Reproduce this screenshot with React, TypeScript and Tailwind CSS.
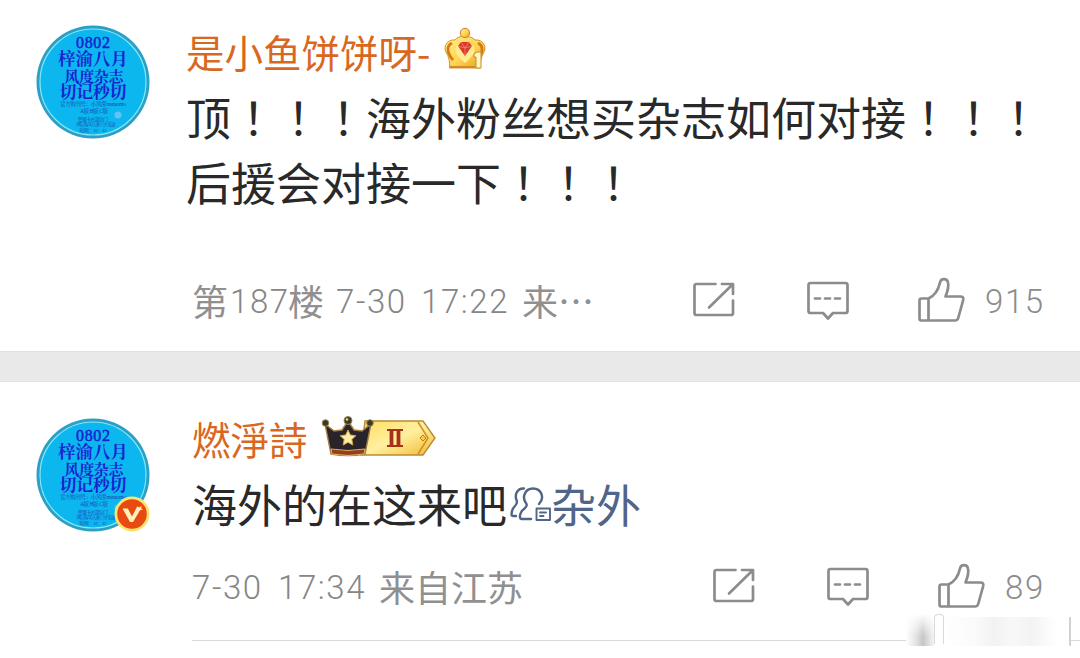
import type { ReactNode } from "react";

function Avatar({ verified = false }: { verified?: boolean }) {
  return (
    <div className="relative h-[116px] w-[116px] shrink-0">
      <svg
        viewBox="0 0 116 116"
        className="h-full w-full font-['Liberation_Serif','Noto_Serif_CJK_SC','Noto_Sans_CJK_SC',serif] font-bold"
        fill="#1a22d2"
        textAnchor="middle"
      >
        <circle cx="58" cy="58" r="56.5" fill="#2c9fc6" />
        <circle cx="58" cy="58" r="53" fill="#0cb6ee" stroke="#85e8f5" strokeWidth="1.2" />
        <text x="58" y="23.5" fontSize="16" fontWeight="400" stroke="#1a22d2" strokeWidth=".5" textLength="34">0802</text>
        <text x="58" y="41" fontSize="17.5" textLength="70">梓渝八月</text>
        <text x="59" y="58" fontSize="15" textLength="59">风度杂志</text>
        <text x="58" y="74" fontSize="17" textLength="67">切记秒切</text>
        <g fontSize="5.5" fontWeight="400" fill="#1746b8">
          <text x="58" y="82" textLength="66">官方购刊号：小风度menuomo</text>
          <text x="59" y="89" textLength="28">A版 B版 C版</text>
          <text x="58" y="96.500" fontSize="4.8" textLength="30">想要卡去超话门</text>
          <text x="61" y="102" fontSize="4.2" textLength="39">国际购买认准官方渠道</text>
          <text x="58" y="108" fontSize="4.8" textLength="27">时间：12：12</text>
        </g>
        <circle cx="83" cy="91" r="3.500" fill="#62c3f7" />
      </svg>
      {verified && (
        <svg viewBox="0 0 36 36" className="absolute top-[79px] left-[79px] h-9 w-9">
          <circle cx="18" cy="18" r="17.500" fill="#fae36f" />
          <circle cx="18" cy="18" r="14.800" fill="#e84b12" />
          <path d="M8.500 12.500h5.300l4.200 8 5.200-10 2.500 1 2-2-.5 3 2 1-3 .6L19 26h-3z" fill="#fff0b6" />
        </svg>
      )}
    </div>
  );
}

function CrownBadge() {
  return (
    <svg viewBox="0 0 44 44" className="h-11 w-11">
      <defs>
        <linearGradient id="gold" x2="1" y2="1">
          <stop stopColor="#fff08a" />
          <stop offset=".55" stopColor="#ffd352" />
          <stop offset="1" stopColor="#e99a18" />
        </linearGradient>
      </defs>
      <path d="M6.500 41C7 35 6 30 3 25c-3-5 1-13 9-12 3-5 16-5 20 0 8-1 12 7 9 12-3 5-4 10-3.500 16z" fill="url(#gold)" stroke="#d8922a" />
      <path d="M9 16c-6 3-5 10 1 17M35 16c6 3 5 10-1 17" fill="none" stroke="#d27b17" strokeWidth="2.800" />
      <path d="M14 18c-4 6 0 11 8 18 8-7 12-12 8-18" fill="#ffec91" />
      <circle cx="22" cy="6" r="4.700" fill="url(#gold)" stroke="#c87b35" />
      <path d="m15 19 3-4h8l3 4-7 10z" fill="#d83b2d" />
      <path d="m15 19 7 2 7-2m-11-4 4 6 4-6m-4 6v8" fill="none" stroke="#f5856a" strokeWidth=".8" />
      <path d="M7 40h25" stroke="#d18b22" strokeWidth="2" />
      <path d="M31 27l3-2h4v16h-5V30h-2z" fill="#fff6c0" stroke="#bd9030" />
    </svg>
  );
}

function LevelBadge() {
  return (
    <svg viewBox="0 0 116 44" className="h-11 w-[116px]">
      <defs>
        <linearGradient id="level" x2="1" y2="1">
          <stop stopColor="#ffdd60" />
          <stop offset=".5" stopColor="#fff0a0" />
          <stop offset="1" stopColor="#f2b92d" />
        </linearGradient>
      </defs>
      <path d="M44 6h58l12 17-12 17H40z" fill="url(#level)" stroke="#b98b35" strokeWidth="1.400" />
      <path d="m97 7 10 16-10 16" fill="none" stroke="#ce8e29" strokeWidth="1.500" />
      <path d="m102 20 3 3-3 3-3-3z" fill="#ffcb38" stroke="#c47b1b" />
      <path d="M4 9l9 7 8-1 6-9 6 9 8 1 9-7-6 30q-17 3-34 0z" fill="#292429" stroke="#a47b43" strokeWidth="1.400" />
      <path d="M10 34q17 3 34 0l-1 5q-16 3-32 0z" fill="#963f20" stroke="#f1bd60" strokeWidth=".9" />
      <g fill="#3a3928" stroke="#9f8751">
        <circle cx="4.500" cy="8" r="3.300" />
        <circle cx="27" cy="5.500" r="4" />
        <circle cx="49" cy="8" r="3.300" />
      </g>
      <circle cx="26" cy="4.500" r="1.300" fill="#e4d9a0" />
      <path d="m27 15 2.300 5 5.500.7-4 3.800 1 5.500-4.800-2.700-4.800 2.700 1-5.500-4-3.800 5.500-.7z" fill="#fff0a6" stroke="#dba64c" />
      <path d="M66 15h16M66 31h16" stroke="#a7301b" strokeWidth="2.200" />
      <path d="M70.500 15v16M77.500 15v16" stroke="#a7301b" strokeWidth="3.800" />
    </svg>
  );
}

function ShareIcon() {
  return (
    <svg viewBox="0 0 42 36" className="h-9 w-[42px]" fill="none" stroke="currentColor" strokeWidth="2.700" strokeLinecap="round" strokeLinejoin="round">
      <path d="M22.500 2H3.500Q1.500 2 1.500 4v27q0 2 2 2H38q2 0 2-2V18.500" />
      <path d="M29 2h11v10M39 3 16 25.500" />
    </svg>
  );
}

function CommentIcon() {
  return (
    <svg viewBox="0 0 42 40" className="h-10 w-[42px]" fill="none" stroke="currentColor" strokeWidth="2.700" strokeLinecap="round" strokeLinejoin="round">
      <path d="M3.500 2h35q2 0 2 2v26q0 2-2 2H26l-5 5.500-5-5.500H3.500q-2 0-2-2V4q0-2 2-2z" />
      <path d="M8 17.500h5m5 0h5m5 0h5" />
    </svg>
  );
}

function LikeIcon() {
  return (
    <svg viewBox="0 0 47 46" className="h-[46px] w-[47px]" fill="none" stroke="currentColor" strokeWidth="2.700" strokeLinejoin="round">
      <path d="M10.500 21.500H3.500q-2 0-2 2V41.500q0 2 2 2H37q2.500 0 3.200-2.500l5-18q.7-3.500-2.700-3.500H27.500c2-5 3.500-10 2.500-14-1-4.500-7-4.500-8 0-1.500 7-5 13-11.500 16zM10.500 21.500v22" />
    </svg>
  );
}

function GroupIcon() {
  return (
    <svg viewBox="0 0 42 36" className="h-9 w-[42px]" fill="none" stroke="#506587" strokeWidth="2.400" strokeLinecap="round" strokeLinejoin="round">
      <path d="M14 2.500C7 2 4.500 9 6.500 14c1 2.500.5 4-1.500 6-3 3-3.500 6-3.500 8.500q0 1.500 2 1.500H6" />
      <path d="M21 33H12c-3 0-2.500-4-.5-7.500 2-3 6.500-4 5-7.500-5-6-2-15.500 6.500-15.500s12 9.500 6 15.500" />
      <path d="M26.500 22.500h13.500V34H26.500zM30 26.500h6M30 30h3.500" strokeWidth="1.900" />
    </svg>
  );
}

function Actions({ count }: { count: string }) {
  return (
    <div className="flex items-center text-[#8c8c8c]">
      <ShareIcon />
      <div className="ml-[72px] pt-0.5"><CommentIcon /></div>
      <div className="ml-[69px]"><LikeIcon /></div>
      <span className="ml-5 h-10 font-['Roboto',sans-serif] text-[33px] leading-[44px] font-light tracking-[1.600px]">{count}</span>
    </div>
  );
}

function Num({ children }: { children: ReactNode }) {
  return (
    <span className="relative -top-px font-['Roboto',sans-serif] text-[33px] font-light tracking-[1.600px] text-[#868686]">
      {children}
    </span>
  );
}

function Marks() {
  return <span className="font-['Noto_Sans_CJK_TC',sans-serif]">！！！</span>;
}

export default function App() {
  return (
    <div className="relative h-[658px] w-[1080px] overflow-hidden bg-white font-['Noto_Sans_CJK_SC',sans-serif] text-[#292929]">
      <article className="flex h-[351px] pt-6 pl-[35px]">
        <Avatar />
        <div className="ml-[35px] flex-1">
          <header className="flex h-14 items-center text-[38.500px] text-[#d9681f]">
            <span className="w-[257px] whitespace-nowrap">是小鱼饼饼呀-</span>
            <div className="-mt-1.5"><CrownBadge /></div>
          </header>
          <p className="mt-1 text-[45px] leading-[65px] whitespace-nowrap">
            顶<Marks />海外粉丝想买杂志如何对接<Marks />
            <br />
            后援会对接一下<Marks />
          </p>
          <footer className="mt-[58px] flex h-14 items-center pl-[6px] text-[36px] leading-none text-[#909090]">
            <div className="-mt-px flex w-[501px] items-center whitespace-nowrap">
              <span className="w-[38px]">第</span>
              <span className="w-[58px]"><Num>187</Num></span>
              <span className="w-[48px]">楼</span>
              <span className="w-[85px]"><Num>7-30</Num></span>
              <span className="w-[101px]"><Num>17:22</Num></span>
              <span>来⋯</span>
            </div>
            <Actions count="915" />
          </footer>
        </div>
      </article>
      <div className="h-[31px] border-y border-[#e1e1e1] bg-[#e9e9e9]" />
      <article className="flex h-[276px] pt-[35px] pl-[35px]">
        <Avatar verified />
        <div className="ml-[41px] flex-1">
          <header className="flex h-11 items-center text-[38.500px] text-[#d9681f]">
            <span className="w-[129px] whitespace-nowrap">燃淨詩</span>
            <div className="-mt-1"><LevelBadge /></div>
          </header>
          <p className="mt-2.5 flex h-[65px] items-center text-[45px] whitespace-nowrap">
            海外的在这来吧
            <span className="flex items-center text-[#506587]">
              <span className="ml-[3px] -mr-px"><GroupIcon /></span>杂外
            </span>
          </p>
          <footer className="mt-[22px] flex h-14 items-center text-[36px] leading-none text-[#909090]">
            <div className="-mt-px flex w-[521px] items-center whitespace-nowrap">
              <span className="w-[86px]"><Num>7-30</Num></span>
              <span className="w-[101px]"><Num>17:34</Num></span>
              <span>来自江苏</span>
            </div>
            <Actions count="89" />
          </footer>
          <div className="mt-[26px] border-t border-[#d9d9d9]" />
        </div>
      </article>
      <div className="absolute top-[614px] left-[906px] flex h-8 w-[165px]">
        <div className="h-full w-7 bg-[linear-gradient(180deg,#fff,transparent_70%),linear-gradient(90deg,#fff,#e4e4e4_35%,#c6c6c6_60%,#f4f4f4)]" />
        <div className="h-[30px] w-2.5 rounded-t border-x border-t border-[#dadada] bg-white" />
        <div className="mt-[3px] flex-1 border-r-2 border-[#d1d1d1] bg-[linear-gradient(90deg,#fff,#fafafa_25%,#f2f2f2_40%,#f8f8f8_55%,#f3f3f3_70%,#fff_90%)]" />
      </div>
    </div>
  );
}
